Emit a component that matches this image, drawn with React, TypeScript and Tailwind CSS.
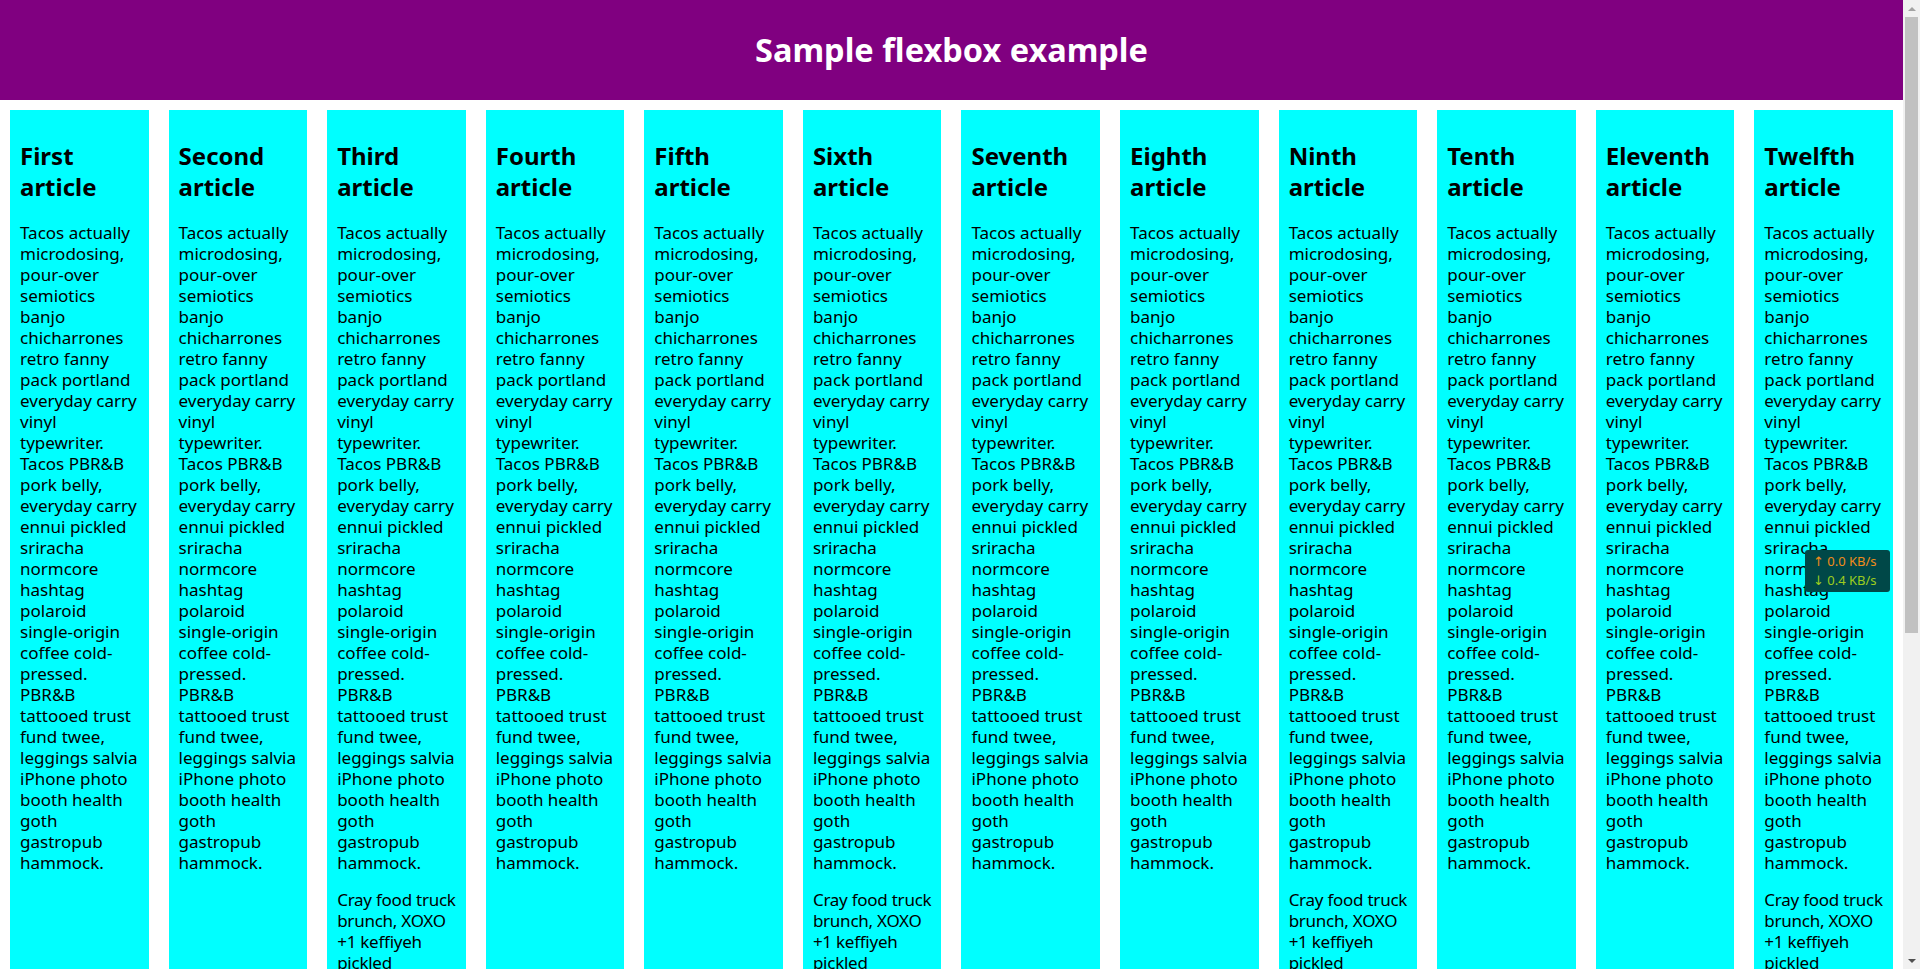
import React from 'react';

const names = [
  'First', 'Second', 'Third', 'Fourth', 'Fifth', 'Sixth',
  'Seventh', 'Eighth', 'Ninth', 'Tenth', 'Eleventh', 'Twelfth',
];

const para1 =
  'Tacos actually microdosing, pour-over semiotics banjo chicharrones retro fanny pack portland everyday carry vinyl typewriter. Tacos PBR&B pork belly, everyday carry ennui pickled sriracha normcore hashtag polaroid single-origin coffee cold-pressed. PBR&B tattooed trust fund twee, leggings salvia iPhone photo booth health goth gastropub hammock.';

const para2 =
  'Cray food truck brunch, XOXO +1 keffiyeh pickled chambray waistcoat ennui. Organic small batch paleo 8-bit. Intelligentsia umami wayfarers pickled, asymmetrical kombucha letterpress kitsch leggings cold-pressed squid chartreuse put a bird on it. Listicle pickled man bun cornhole heirloom art party.';

export default function App() {
  return (
    <div className="relative font-['Noto_Sans',sans-serif] text-black bg-white">
      <div className="mr-[17px]">
        {/* header bar */}
        <header className="h-[100px] bg-[#800080]">
          <h1 className="m-0 text-center text-white text-[32.5px] font-bold leading-[100px]">
            Sample flexbox example
          </h1>
        </header>

        <section className="flex">
          {names.map((name, i) => (
            <article key={name} className="flex-1 min-w-0 m-[10px] p-[10px] bg-[#00ffff]">
              <h2 className="mt-[20px] mb-[20px] text-[24px] font-bold leading-[31px]">
                {name} article
              </h2>
              <p className="my-[16px] text-[17px] leading-[21px]">{para1}</p>
              {i % 3 === 2 && (
                <p className="my-[16px] text-[17px] leading-[21px] tracking-[-0.25px]">{para2}</p>
              )}
            </article>
          ))}
        </section>
      </div>

      {/* browser scrollbar */}
      <div className="fixed right-0 top-0 h-screen w-[17px] bg-[#f1f1f1] flex flex-col items-center">
        <div className="h-[17px] flex items-center justify-center">
          <div className="w-0 h-0 border-l-[4px] border-r-[4px] border-b-[4px] border-l-transparent border-r-transparent border-b-[#a3a3a3]" />
        </div>
        <div className="w-[13px] h-[616px] bg-[#c1c1c1]" />
        <div className="flex-1" />
        <div className="h-[17px] flex items-center justify-center">
          <div className="w-0 h-0 border-l-[4px] border-r-[4px] border-t-[4px] border-l-transparent border-r-transparent border-t-[#505050]" />
        </div>
      </div>

      {/* net speed overlay */}
      <div className="fixed left-[1805px] top-[550px] w-[85px] h-[42px] rounded-[3px] bg-[#004848] pl-[8px] pt-[2px] text-[13px] leading-[19px]">
        <div className="text-[#f08c1a]">
          <span className="font-['DejaVu_Sans',sans-serif]">↑</span> 0.0 KB/s
        </div>
        <div className="text-[#9ccc1e]">
          <span className="font-['DejaVu_Sans',sans-serif]">↓</span> 0.4 KB/s
        </div>
      </div>
    </div>
  );
}
